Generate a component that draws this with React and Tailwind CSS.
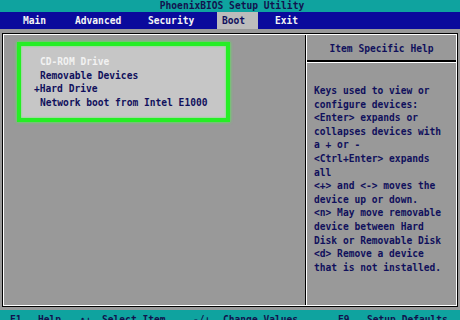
export default function App() {
  const bootItems = [
    { label: "CD-ROM Drive", color: "text-[#f2f2f2]" },
    { label: "Removable Devices", color: "text-[#10105c]" },
    { label: "+Hard Drive", color: "text-[#10105c]", hang: true },
    { label: "Network boot from Intel E1000", color: "text-[#10105c]" },
  ];

  const helpLines = [
    "Keys used to view or",
    "configure devices:",
    "<Enter> expands or",
    "collapses devices with",
    "a + or -",
    "<Ctrl+Enter> expands",
    "all",
    "<+> and <-> moves the",
    "device up or down.",
    "<n> May move removable",
    "device between Hard",
    "Disk or Removable Disk",
    "<d> Remove a device",
    "that is not installed.",
  ];

  return (
    <div className="w-[460px] h-[320px] overflow-hidden bg-[#999999] font-['DejaVu_Sans_Mono','Liberation_Mono',monospace] font-bold text-[9.6px]">
      {/* title */}
      <div className="h-[12px] bg-[#0fa39f] flex items-center justify-center leading-[12px] text-[#12124e] pl-[4px]">
        PhoenixBIOS Setup Utility
      </div>

      {/* menu bar */}
      <div className="h-[17px] bg-[#0a0a9c] flex items-stretch pl-[23px] text-[#f4f4f4] leading-[18px]">
        <span className="w-[52px]">Main</span>
        <span className="w-[73px]">Advanced</span>
        <span className="w-[69px]">Security</span>
        <span className="w-[41px] pl-[5px] bg-[#bcbcbc] text-[#10105c]">Boot</span>
        <span className="ml-[17px]">Exit</span>
      </div>

      {/* main frame */}
      <div className="mx-[2px] mt-[4px] h-[274px] border border-black">
        <div className="h-full border border-white flex">
          <div className="w-[302px] border-r border-black pl-[13px] pt-[7px]">
            <div className="w-[213px] h-[80px] border-[4px] border-[#25ee25] shadow-[0_0_3px_#45ff45,inset_0_0_2px_#45ff45] bg-[#c6c6c6] pl-[19px] pt-[9px] leading-[13.5px]">
              {bootItems.map((item) => (
                <div
                  key={item.label}
                  className={`whitespace-pre ${item.color} ${item.hang ? "-ml-[6px]" : ""}`}
                >
                  {item.label}
                </div>
              ))}
            </div>
          </div>

          <div className="flex-1 border-l border-white flex flex-col">
            <div className="h-[27px] border-b-2 border-black flex items-center justify-center pt-[3px] text-[#10105c]">
              Item Specific Help
            </div>
            <div className="border-t border-white pl-[7px] pt-[21px] leading-[13.6px] text-[#10105c]">
              {helpLines.map((line, i) => (
                <div key={i} className="whitespace-pre">
                  {line}
                </div>
              ))}
            </div>
          </div>
        </div>
      </div>

      {/* footer */}
      <div className="mt-[3px] h-[14px] bg-[#0fa39f] flex pt-[4px] pl-[10px] leading-[12px] text-[#12124e] whitespace-pre">
        <span className="w-[28px]">F1</span>
        <span className="w-[42px]">Help</span>
        <span className="w-[22px]">↑↓</span>
        <span className="w-[91px]">Select Item</span>
        <span className="w-[30px]">-/+</span>
        <span className="w-[115px]">Change Values</span>
        <span className="w-[29px]">F9</span>
        <span>Setup Defaults</span>
      </div>
    </div>
  );
}
